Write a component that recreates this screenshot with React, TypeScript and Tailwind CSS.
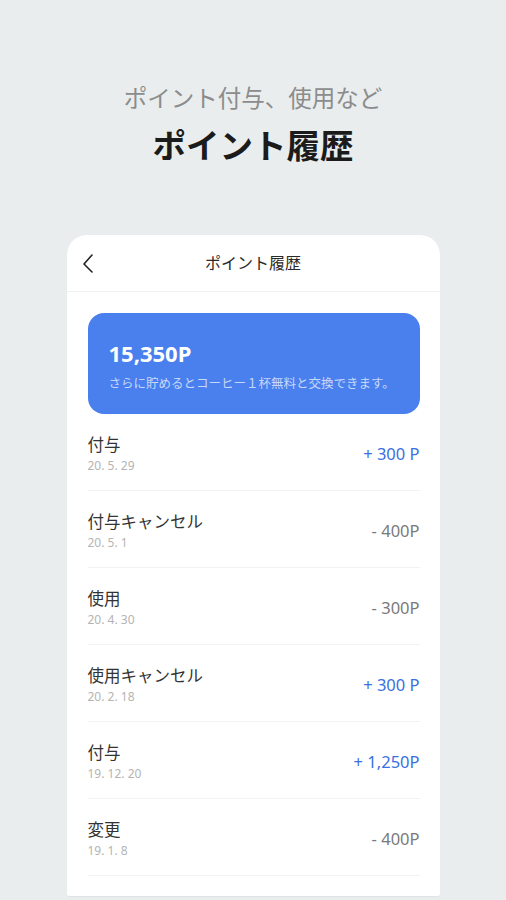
const rows = [
  { label: "付与", date: "20. 5. 29", amount: "+ 300 P", plus: true },
  { label: "付与キャンセル", date: "20. 5. 1", amount: "- 400P", plus: false },
  { label: "使用", date: "20. 4. 30", amount: "- 300P", plus: false },
  { label: "使用キャンセル", date: "20. 2. 18", amount: "+ 300 P", plus: true },
  { label: "付与", date: "19. 12. 20", amount: "+ 1,250P", plus: true },
  { label: "変更", date: "19. 1. 8", amount: "- 400P", plus: false },
];

export default function App() {
  return (
    <div
      className="h-[900px] w-full overflow-hidden bg-[#e9edee] pt-[83px]"
      style={{ fontFamily: '"Noto Sans", "Noto Sans CJK JP", sans-serif' }}
    >
      {/* Heading */}
      <div className="text-center">
        <p className="text-[23.5px] leading-[30px] text-[#8c8c8c]">ポイント付与、使用など</p>
        <h1 className="mt-[12px] text-[33.5px] leading-[40px] font-bold text-[#1b1b1b]">ポイント履歴</h1>
      </div>

      {/* Phone card */}
      <div className="mx-auto mt-[70px] w-[373px] rounded-t-[20px] rounded-b-[2px] bg-white pb-[20px] shadow-[0_1px_0_#dfe3e5]">
        <div className="relative flex h-[57px] items-center justify-center border-b border-[#eef0f1]">
          <svg
            className="absolute left-[15px] top-[19px]"
            width="14"
            height="20"
            viewBox="0 0 14 20"
            fill="none"
            stroke="#222"
            strokeWidth="1.6"
            strokeLinecap="round"
            strokeLinejoin="round"
          >
            <polyline points="10,1 2,10 10,18" />
          </svg>
          <span className="text-[16px] text-[#2a2a2a]">ポイント履歴</span>
        </div>

        <div className="pl-[21px] pr-[20px]">
          <div className="mt-[21px] h-[101px] rounded-[16px] bg-[#4a80ee] px-[21px] pt-[27px]">
            <p className="text-[22px] leading-[26px] font-bold text-white">15,350P</p>
            <p className="mt-[9px] text-[12.5px] leading-[18px] text-white/70">
              さらに貯めるとコーヒー１杯無料と交換できます。
            </p>
          </div>

          {rows.map((r, i) => (
            <div key={i} className="flex items-center justify-between border-b border-[#f1f2f3] pt-[20px] pb-[15px]">
              <div>
                <p className="text-[16.5px] leading-[22px] text-[#333]">{r.label}</p>
                <p className="mt-[1px] text-[12px] leading-[18px] text-[#b4b4b4]">{r.date}</p>
              </div>
              <span className={r.plus ? "text-[16.5px] text-[#3a70e2]" : "text-[16.5px] text-[#7a7a7a]"}>
                {r.amount}
              </span>
            </div>
          ))}
        </div>
      </div>
    </div>
  );
}
